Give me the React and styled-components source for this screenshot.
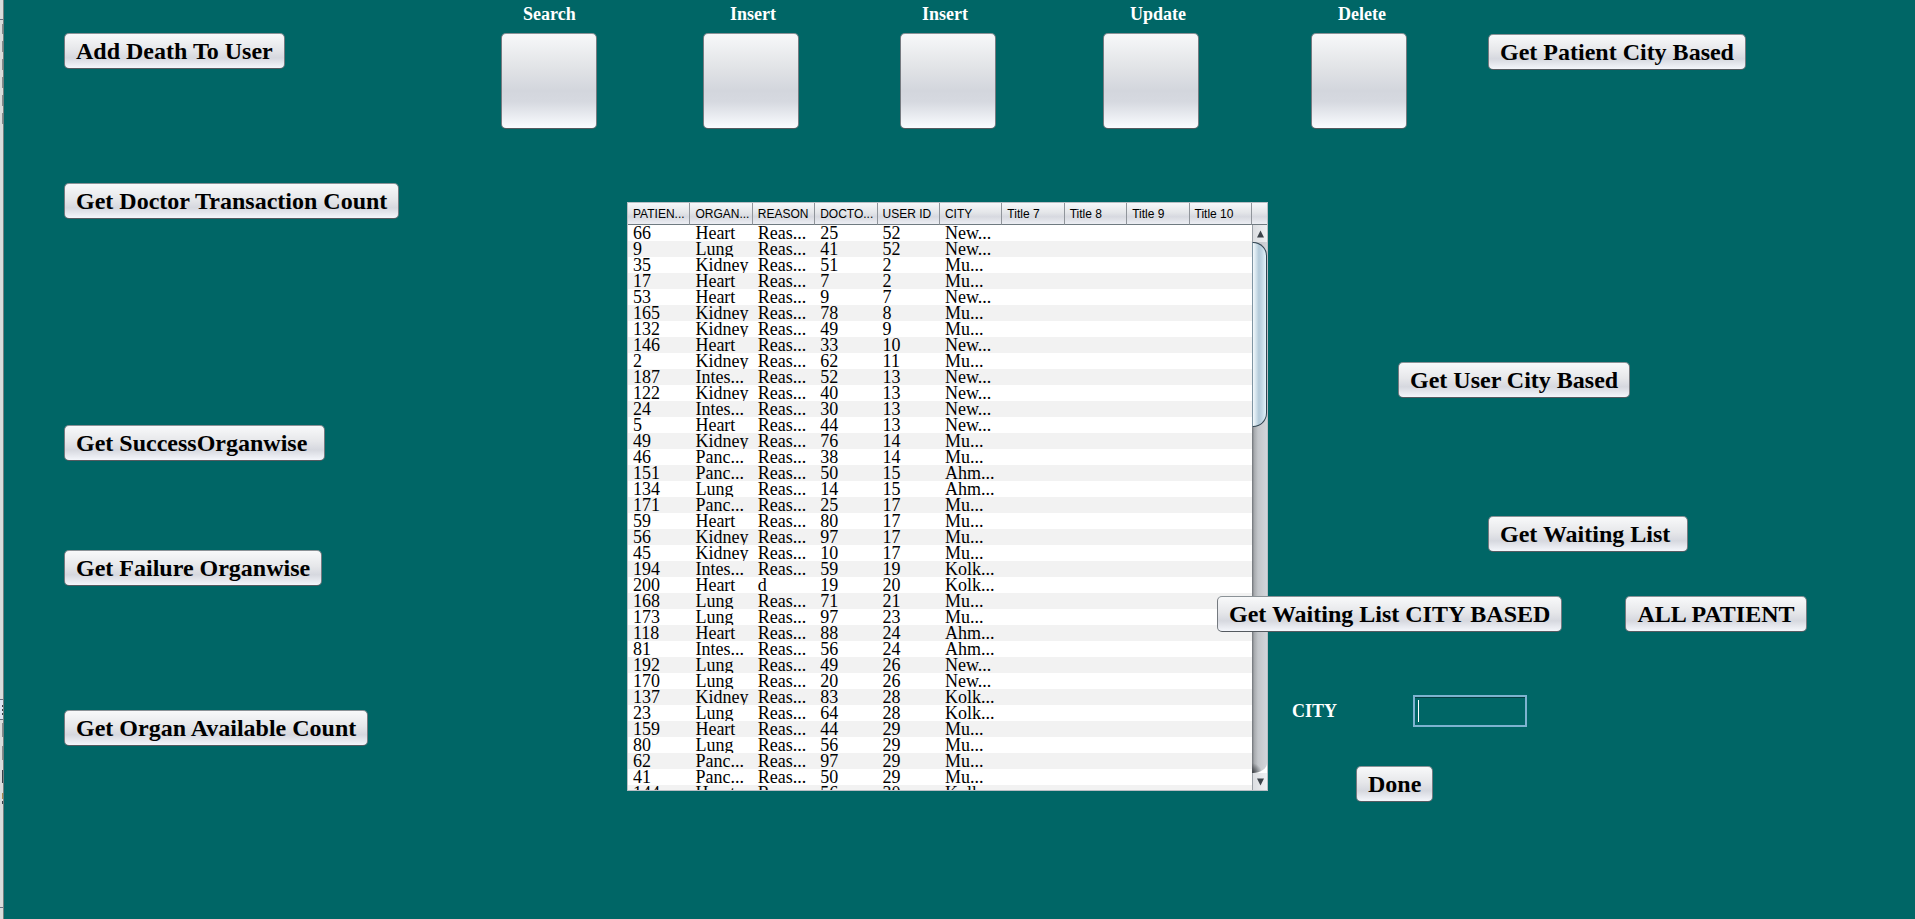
import React from "react";
import styled, { createGlobalStyle } from "styled-components";

const GlobalStyle = createGlobalStyle`
  *, *::before, *::after { box-sizing: border-box; }
  body { margin: 0; background: #006666; }
`;

const SERIF = '"Liberation Serif", "Times New Roman", serif';
const SANS = '"Liberation Sans", Arial, sans-serif';

const Page = styled.div`
  display: grid;
  grid-template-columns: 4px minmax(0, 1fr);
  min-height: 100vh;
  overflow: hidden;
  background: #006666;
  font-family: ${SERIF};
`;

const Edge = styled.aside`
  background: #d9dcda;
  border-right: 1px solid #73807f;
  contain: size;
  overflow: hidden;

  svg { display: block; }
`;

const Body = styled.div`
  display: grid;
  grid-template-columns: minmax(0, 437fr) minmax(0, 1414fr);
  padding-left: 60px;
`;

const Reports = styled.nav`
  display: flex;
  flex-direction: column;
  align-items: flex-start;
  padding-top: 33px;
`;

const ActionButton = styled.button`
  flex: none;
  height: 36px;
  margin: ${(p) => p.$above || 0}px 0 0 ${(p) => p.$indent || 0}px;
  padding: 0 11px;
  border: 1px solid;
  border-color: #8b9297 #757a80 #555a60;
  border-radius: 5px;
  background: linear-gradient(#f8f9fa, #e6e7ea 45%, #d6d8df 70%, #f4f6fb);
  color: #000;
  font: bold 24px/28px ${SERIF};
  white-space: pre;
`;

const Workspace = styled.main`
  display: grid;
  grid-template-rows: 202px auto;
`;

const Toolbar = styled.header`
  display: grid;
  grid-template-columns: 202fr 197fr 203fr 208fr 177fr 427fr;
  align-items: start;
`;

const Tool = styled.div`
  display: flex;
  flex-direction: column;
  align-items: flex-start;
  gap: 9px;
  padding-top: 4px;
`;

const ToolLabel = styled.label`
  padding-left: ${(p) => p.$indent}px;
  color: #fff;
  font: bold 18px/20px ${SERIF};
`;

const ToolButton = styled.button`
  width: 96px;
  height: 96px;
  padding: 0;
  border: 1px solid;
  border-color: #8b9297 #757a80 #555a60;
  border-radius: 5px;
  background: linear-gradient(#f7f8f9, #e2e4e7 35%, #d3d6dd 60%, #d6d9e0 72%, #fafcff);
`;

const Content = styled.section`
  display: grid;
  grid-template-columns: minmax(0, 126fr) minmax(0, 641fr) minmax(0, 647fr);
  align-items: start;
`;

const TablePane = styled.div`
  grid-column: 2;
  display: flex;
  height: 589px;
  border: 1px solid #b9bec4;
  background: #fff;
  overflow: hidden;
`;

const Viewport = styled.div`
  flex: 1;
  min-width: 0;
  overflow: hidden;
`;

const Records = styled.table`
  width: 100%;
  table-layout: fixed;
  border-collapse: separate;
  border-spacing: 0;
  color: #000;
`;

const headerFill = "linear-gradient(#f7f8fa, #e4e6e9 45%, #d7d9e0 65%, #eceef3)";

const HeadCell = styled.th`
  height: 22px;
  padding: 0 0 0 5px;
  border-right: 1px solid #90959b;
  border-bottom: 1px solid #6f7a80;
  background: ${headerFill};
  font: 12px/18px ${SANS};
  text-align: left;
  white-space: nowrap;
  overflow: hidden;
`;

const Row = styled.tr`
  background: #fff;

  &:nth-child(even) { background: #f2f2f2; }
`;

const Cell = styled.td`
  height: 16px;
  padding: 0 0 0 5px;
  font: 18px/16px ${SERIF};
  white-space: nowrap;
  overflow: hidden;
`;

const ScrollColumn = styled.div`
  flex: none;
  display: flex;
  flex-direction: column;
  width: 15px;
`;

const Corner = styled.div`
  height: 22px;
  border-bottom: 1px solid #6f7a80;
  background: ${headerFill};
`;

const ArrowButton = styled.button`
  display: flex;
  align-items: center;
  justify-content: center;
  height: 17px;
  padding: 0;
  border: 0;
  border-left: 1px solid #9aa0a6;
  background: linear-gradient(90deg, #dcdee2, #eef0f2);
`;

const Track = styled.div`
  flex: 1;
  border-bottom-right-radius: 14px 10px;
  background:
    radial-gradient(circle at 0 100%, #3c4045, transparent 10px),
    linear-gradient(90deg, #6f7378, #a7aaae 15%, #c3c6ca 40%, #d2d5da);
`;

const Thumb = styled.div`
  height: 185px;
  border: 1px solid #2f4350;
  border-left: 1px solid #7f95a3;
  border-radius: 0 14px 14px 0;
  background: linear-gradient(90deg, #f3f9fc, #d5e4ed 22%, #b3cad9 45%, #c3d8e5 70%, #e2f3fa);
`;

const Filters = styled.form`
  grid-column: 3;
  position: relative;
  display: flex;
  flex-direction: column;
  align-items: flex-start;
  padding-top: 160px;
`;

const WaitingRow = styled.div`
  display: flex;
  gap: 63px;
  margin: 44px 0 0 -51px;
`;

const CityRow = styled.div`
  display: flex;
  align-items: center;
  margin: 63px 0 0 24px;
`;

const CityLabel = styled.label`
  width: 121px;
  color: #fff;
  font: bold 18px/20px ${SERIF};
`;

const CityInput = styled.input`
  width: 114px;
  height: 32px;
  padding: 4px 6px;
  border: 2px solid #7db3d0;
  border-radius: 0;
  outline: none;
  background:
    linear-gradient(#fff, #fff) 3px 3px / 1px 22px no-repeat,
    linear-gradient(#063f42, #063f42) 0 0 / 100% 1px no-repeat,
    #006666;
  color: #fff;
  font: 18px/20px ${SERIF};
`;

const tools = [
  { id: "search", label: "Search", indent: 22 },
  { id: "insert-patient", label: "Insert", indent: 27 },
  { id: "insert-user", label: "Insert", indent: 22 },
  { id: "update", label: "Update", indent: 27 },
  { id: "delete", label: "Delete", indent: 27 },
];

const reports = [
  { label: "Add Death To User", above: 0 },
  { label: "Get Doctor Transaction Count", above: 114 },
  { label: "Get SuccessOrganwise ", above: 206 },
  { label: "Get Failure Organwise", above: 89 },
  { label: "Get Organ Available Count", above: 124 },
];

const columns = [
  "PATIEN...", "ORGAN...", "REASON", "DOCTO...", "USER ID",
  "CITY", "Title 7", "Title 8", "Title 9", "Title 10",
];

const R = "Reas...";
const records = [
  ["66", "Heart", R, "25", "52", "New..."],
  ["9", "Lung", R, "41", "52", "New..."],
  ["35", "Kidney", R, "51", "2", "Mu..."],
  ["17", "Heart", R, "7", "2", "Mu..."],
  ["53", "Heart", R, "9", "7", "New..."],
  ["165", "Kidney", R, "78", "8", "Mu..."],
  ["132", "Kidney", R, "49", "9", "Mu..."],
  ["146", "Heart", R, "33", "10", "New..."],
  ["2", "Kidney", R, "62", "11", "Mu..."],
  ["187", "Intes...", R, "52", "13", "New..."],
  ["122", "Kidney", R, "40", "13", "New..."],
  ["24", "Intes...", R, "30", "13", "New..."],
  ["5", "Heart", R, "44", "13", "New..."],
  ["49", "Kidney", R, "76", "14", "Mu..."],
  ["46", "Panc...", R, "38", "14", "Mu..."],
  ["151", "Panc...", R, "50", "15", "Ahm..."],
  ["134", "Lung", R, "14", "15", "Ahm..."],
  ["171", "Panc...", R, "25", "17", "Mu..."],
  ["59", "Heart", R, "80", "17", "Mu..."],
  ["56", "Kidney", R, "97", "17", "Mu..."],
  ["45", "Kidney", R, "10", "17", "Mu..."],
  ["194", "Intes...", R, "59", "19", "Kolk..."],
  ["200", "Heart", "d", "19", "20", "Kolk..."],
  ["168", "Lung", R, "71", "21", "Mu..."],
  ["173", "Lung", R, "97", "23", "Mu..."],
  ["118", "Heart", R, "88", "24", "Ahm..."],
  ["81", "Intes...", R, "56", "24", "Ahm..."],
  ["192", "Lung", R, "49", "26", "New..."],
  ["170", "Lung", R, "20", "26", "New..."],
  ["137", "Kidney", R, "83", "28", "Kolk..."],
  ["23", "Lung", R, "64", "28", "Kolk..."],
  ["159", "Heart", R, "44", "29", "Mu..."],
  ["80", "Lung", R, "56", "29", "Mu..."],
  ["62", "Panc...", R, "97", "29", "Mu..."],
  ["41", "Panc...", R, "50", "29", "Mu..."],
  ["144", "Heart", R, "56", "30", "Kolk..."],
];

function EdgeMarks() {
  return (
    <svg width="4" height="919" aria-hidden="true">
      <path d="M0 19.5h4M0 699.5h4M0 719.5h4M0 907.5h4" stroke="#667080" />
      <path d="M0 700h4v19h-4z" fill="#dde4f0" />
      <path
        d="M2.500 24v10M2.500 41v11M2.500 59v11M2.500 77v11M2.500 95v11M2.500 113v11M2.500 723v14M2.500 746v14"
        stroke="#858b8c"
      />
      <path d="M2.500 705v2M2.500 709v2M2.500 713v2M2.500 770v13M2.500 801v3" stroke="#39414a" />
      <path d="M2.500 793v6" stroke="#a58a4c" />
    </svg>
  );
}

function Arrow({ down }) {
  return (
    <svg width="7" height="8" viewBox="0 0 7 8" aria-hidden="true">
      <path d={down ? "M0 0.500h7L3.500 7.500z" : "M0 7.500h7L3.500 0.500z"} fill="#3c434a" />
    </svg>
  );
}

function RecordTable() {
  return (
    <TablePane>
      <Viewport>
        <Records>
          <thead>
            <tr>{columns.map((c) => <HeadCell key={c} scope="col">{c}</HeadCell>)}</tr>
          </thead>
          <tbody>
            {records.map((r) => (
              <Row key={r[0]}>
                {columns.map((c, i) => <Cell key={c}>{r[i]}</Cell>)}
              </Row>
            ))}
          </tbody>
        </Records>
      </Viewport>
      <ScrollColumn>
        <Corner />
        <ArrowButton type="button" aria-label="Scroll up"><Arrow /></ArrowButton>
        <Track><Thumb /></Track>
        <ArrowButton type="button" aria-label="Scroll down"><Arrow down /></ArrowButton>
      </ScrollColumn>
    </TablePane>
  );
}

export default function App() {
  return (
    <>
      <GlobalStyle />
      <Page>
        <Edge><EdgeMarks /></Edge>
        <Body>
          <Reports>
            {reports.map((r) => (
              <ActionButton key={r.label} type="button" $above={r.above}>{r.label}</ActionButton>
            ))}
          </Reports>
          <Workspace>
            <Toolbar>
              {tools.map((t) => (
                <Tool key={t.id}>
                  <ToolLabel htmlFor={t.id} $indent={t.indent}>{t.label}</ToolLabel>
                  <ToolButton id={t.id} type="button" />
                </Tool>
              ))}
              <div>
                <ActionButton type="button" $above={34}>Get Patient City Based</ActionButton>
              </div>
            </Toolbar>
            <Content>
              <RecordTable />
              <Filters onSubmit={(e) => e.preventDefault()}>
                <ActionButton type="button" $indent={130}>Get User City Based</ActionButton>
                <ActionButton type="button" $above={118} $indent={220}>{"Get Waiting List "}</ActionButton>
                <WaitingRow>
                  <ActionButton type="button">Get Waiting List CITY BASED</ActionButton>
                  <ActionButton type="button">ALL PATIENT</ActionButton>
                </WaitingRow>
                <CityRow>
                  <CityLabel htmlFor="city">CITY</CityLabel>
                  <CityInput id="city" type="text" />
                </CityRow>
                <ActionButton type="submit" $above={39} $indent={88}>Done</ActionButton>
              </Filters>
            </Content>
          </Workspace>
        </Body>
      </Page>
    </>
  );
}
